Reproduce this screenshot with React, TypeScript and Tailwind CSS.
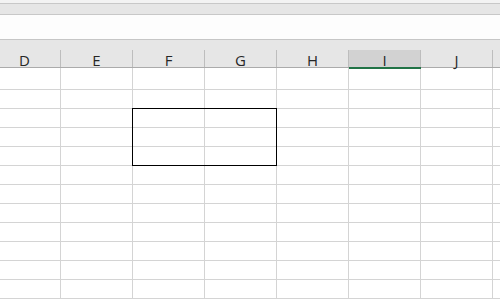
const columns = ["D", "E", "F", "G", "H", "I", "J", ""];
const activeColumn = "I";

// first row is a bit taller than the rest
const rowHeights = [22, 19, 19, 19, 19, 19, 19, 19, 19, 19, 19, 19];

export default function App() {
  return (
    <div
      className="relative w-[500px] h-[300px] overflow-hidden bg-white"
      style={{ fontFamily: '"Open Sans", "Noto Sans", sans-serif' }}
    >
      {/* ribbon / formula bar strips */}
      <div className="h-[3px] bg-[#f3f3f3]" />
      <div className="h-[12px] bg-[#e6e6e6] border-y border-[#c8c8c8]" />
      <div className="h-[24px] bg-[#fdfdfd]" />
      <div className="h-px bg-[#c6c6c6]" />

      {/* column headers */}
      <div className="bg-[#e6e6e6] pt-[10px]">
        <div className="flex ml-[-11px] h-[18px] border-b border-[#ababab]">
          {columns.map((col, i) => (
            <div
              key={i}
              className={`relative w-[72px] shrink-0 border-r border-[#bdbdbd] flex justify-center text-[15px] leading-[17px] pt-[2px] text-[#262626] ${
                col === activeColumn ? "bg-[#d2d2d2]" : ""
              }`}
            >
              {col}
              {col === activeColumn && (
                <div className="absolute left-0 right-[-1px] bottom-[-2px] h-[2px] bg-[#217346]" />
              )}
            </div>
          ))}
        </div>
      </div>

      {/* cells */}
      <div className="ml-[-11px]">
        {rowHeights.map((h, i) => (
          <div
            key={i}
            className="flex border-b border-[#d4d4d4]"
            style={{ height: h }}
          >
            {columns.map((col, j) => (
              <div
                key={j}
                className="w-[72px] shrink-0 border-r border-[#d4d4d4]"
              />
            ))}
          </div>
        ))}
      </div>

      {/* selection outline F2:G4 */}
      <div className="absolute left-[132px] top-[108px] w-[145px] h-[58px] border border-black" />
    </div>
  );
}
